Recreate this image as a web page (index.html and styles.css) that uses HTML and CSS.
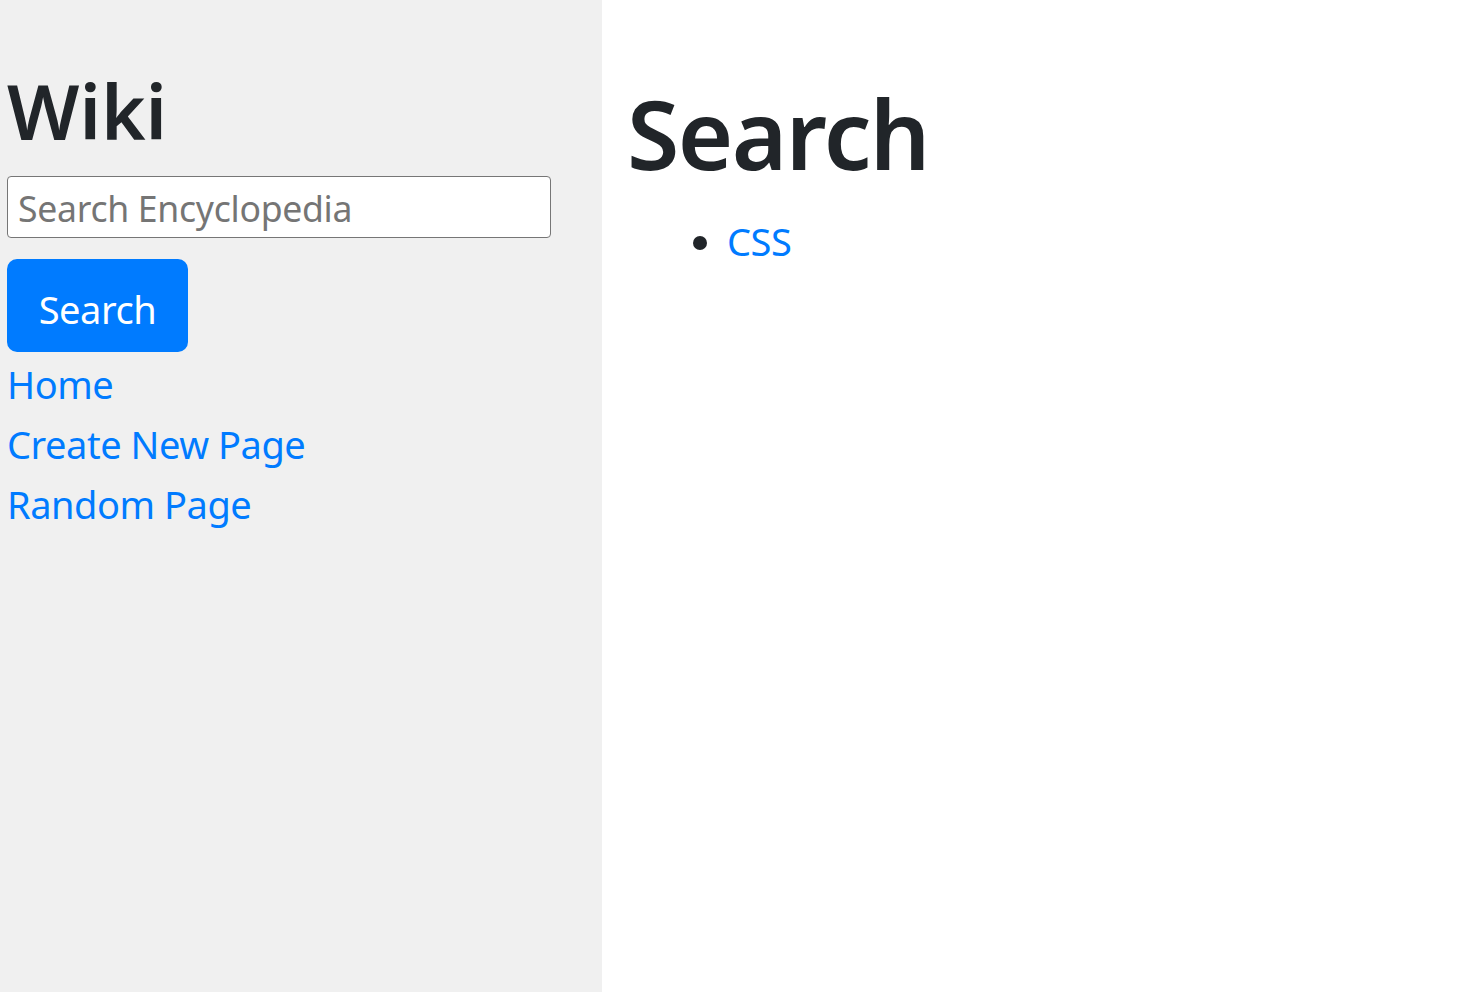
FILE: index.html
```html
<!DOCTYPE html>
<html lang="en">
<head>
<meta charset="utf-8">
<title>Search</title>
<link rel="stylesheet" href="styles.css">
</head>
<body>
<div class="layout">
  <div class="sidebar">
    <h2 class="brand">Wiki</h2>
    <form class="search-form" action="#">
      <input class="search" type="text" name="q" placeholder="Search Encyclopedia">
      <button class="btn-search" type="submit">Search</button>
    </form>
    <div class="nav-item"><a class="nav-link" href="#">Home</a></div>
    <div class="nav-item"><a class="nav-link" href="#">Create New Page</a></div>
    <div class="nav-item"><a class="nav-link" href="#">Random Page</a></div>
  </div>
  <div class="main">
    <h1 class="page-title">Search</h1>
    <ul class="results">
      <li class="result-item"><a class="result-link" href="#">CSS</a></li>
    </ul>
  </div>
</div>
</body>
</html>
```

FILE: styles.css
```css
html, body {
  margin: 0;
  padding: 0;
  background: #ffffff;
}

body {
  font-family: "Noto Sans", "Open Sans", sans-serif;
  font-size: 38px;
  line-height: 60px;
  letter-spacing: -0.012em;
  color: #212529;
}

.layout {
  display: flex;
  min-height: 100vh;
}

.sidebar {
  width: 602px;
  flex: none;
  box-sizing: border-box;
  background: #f0f0f0;
  padding: 60px 0 0 7px;
}

.brand {
  margin: 0 0 20px 0;
  padding-top: 5px;
  font-size: 76px;
  line-height: 91px;
  font-weight: 600;
  letter-spacing: 0;
}

.search-form {
  display: flex;
  flex-direction: column;
  align-items: flex-start;
  gap: 21px;
  margin: 0;
}

.search {
  width: 544px;
  height: 62px;
  box-sizing: border-box;
  border: 1.5px solid #767676;
  border-radius: 4px;
  padding: 1px 10px 0 10px;
  background: #ffffff;
  font-family: inherit;
  font-size: 35.6px;
  letter-spacing: -0.008em;
  color: #212529;
  outline: none;
}

.search::placeholder {
  color: #757575;
  opacity: 1;
}

.btn-search {
  width: 181px;
  height: 93px;
  box-sizing: border-box;
  padding: 6px 0 0 0;
  border: none;
  border-radius: 10px;
  background: #007bff;
  color: #ffffff;
  font-family: inherit;
  font-size: 38px;
  line-height: 60px;
  letter-spacing: -0.012em;
  text-align: center;
  cursor: pointer;
}

.nav-item {
  padding-top: 5px;
  line-height: 55px;
}

.nav-link,
.result-link {
  color: #007bff;
  text-decoration: none;
}

.main {
  flex: 1;
  padding: 69px 0 0 25px;
}

.page-title {
  margin: 0 0 20px 0;
  padding-top: 9px;
  font-size: 95px;
  line-height: 111px;
  font-weight: 600;
  letter-spacing: -0.016em;
}

.results {
  margin: 0;
  padding-left: 100px;
}

.result-item {
  padding-top: 5px;
  line-height: 55px;
}
```
